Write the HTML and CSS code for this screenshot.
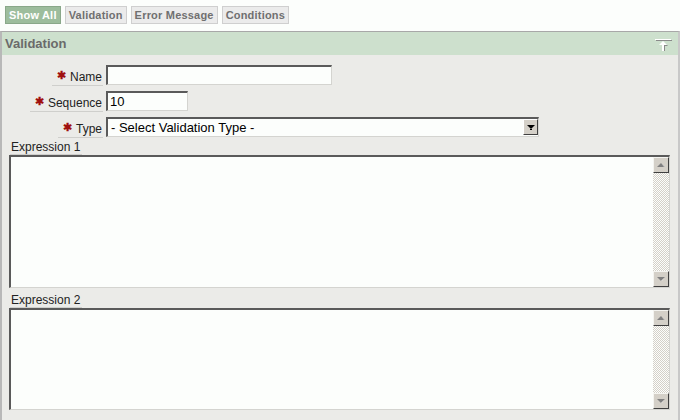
FILE: index.html
```html
<!DOCTYPE html>
<html>
<head>
<meta charset="utf-8">
<link rel="stylesheet" href="styles.css">
</head>
<body>
<div class="tabs">
  <span class="tab tab-active">Show All</span>
  <span class="tab">Validation</span>
  <span class="tab">Error Message</span>
  <span class="tab">Conditions</span>
</div>
<div class="region">
  <div class="region-head">
    <span class="region-title">Validation</span>
    <svg class="collapse" width="18" height="16" viewBox="0 0 18 16">
      <rect x="1" y="2" width="16" height="1" fill="#ffffff"/>
      <rect x="2" y="3" width="16" height="1" fill="#8a8a8a"/>
      <path d="M9 4 L13 8 L10 8 L10 14 L8 14 L8 8 L5 8 Z" fill="#ffffff"/>
      <path d="M10 14 L11 14 L11 9 L14 9 L13 8 L10 8 Z" fill="#8a8a8a"/>
    </svg>
  </div>
  <div class="region-body">
    <div class="form">
      <div class="lbl-cell"><span class="lbl"><span class="req">&#x2731;</span> Name</span></div>
      <div class="field"><div class="input w-name"></div></div>
      <div class="lbl-cell"><span class="lbl"><span class="req">&#x2731;</span> Sequence</span></div>
      <div class="field"><div class="input w-seq">10</div></div>
      <div class="lbl-cell"><span class="lbl"><span class="req">&#x2731;</span> Type</span></div>
      <div class="field">
        <div class="input select">
          <span class="select-text">- Select Validation Type -</span>
          <span class="select-btn"><svg width="8" height="5" viewBox="0 0 8 5"><path d="M0 0 H8 L4 4 Z" fill="#000"/><rect x="3" y="4" width="2" height="1" fill="#000"/></svg></span>
        </div>
      </div>
    </div>
    <div class="expr expr-1">
      <span class="expr-lbl">Expression 1</span>
      <div class="area area-1">
        <div class="area-text"></div>
        <div class="sbar">
          <span class="sbtn"><svg width="10" height="6" viewBox="0 0 10 6"><path d="M1 5 L5 1 L9 5 Z" fill="#808080"/><path d="M5 1 L9 5 L8 5 Z" fill="#ffffff" opacity="0.6"/></svg></span>
          <span class="strack"></span>
          <span class="sbtn"><svg width="10" height="6" viewBox="0 0 10 6"><path d="M1 1 L9 1 L5 5 Z" fill="#808080"/><path d="M9 1 L5 5 L6 5 Z" fill="#ffffff" opacity="0.6"/></svg></span>
        </div>
      </div>
    </div>
    <div class="expr expr-2">
      <span class="expr-lbl">Expression 2</span>
      <div class="area area-2">
        <div class="area-text"></div>
        <div class="sbar">
          <span class="sbtn"><svg width="10" height="6" viewBox="0 0 10 6"><path d="M1 5 L5 1 L9 5 Z" fill="#808080"/><path d="M5 1 L9 5 L8 5 Z" fill="#ffffff" opacity="0.6"/></svg></span>
          <span class="strack"></span>
          <span class="sbtn"><svg width="10" height="6" viewBox="0 0 10 6"><path d="M1 1 L9 1 L5 5 Z" fill="#808080"/><path d="M9 1 L5 5 L6 5 Z" fill="#ffffff" opacity="0.6"/></svg></span>
        </div>
      </div>
    </div>
  </div>
</div>
</body>
</html>
```
FILE: styles.css
```css
html, body {
  margin: 0;
  padding: 0;
  background: #fcfefc;
  font-family: "Liberation Sans", Arial, sans-serif;
  font-size: 12px;
  color: #000;
  overflow: hidden;
}
.tabs {
  display: flex;
  gap: 4px;
  padding: 6px 5px 7px 5px;
}
.tab {
  display: inline-block;
  height: 16px;
  line-height: 16px;
  padding: 0 3px;
  border: 1px solid #cfcfcf;
  background: #ebebeb;
  color: #707070;
  font-weight: bold;
  font-size: 11px;
  letter-spacing: 0.2px;
}
.tab-active {
  background: #9dbd9d;
  border-color: #8aa88a;
  color: #ffffff;
}
.region {
  width: 676px;
  border-top: 1px solid #a8a8a8;
  border-left: 2px solid #b8b8b8;
  border-right: 2px solid #c8c8c8;
}
.region-head {
  display: flex;
  align-items: center;
  justify-content: space-between;
  height: 23px;
  padding: 0 6px 0 3px;
  background: #cde0cd;
}
.region-title {
  font-size: 13px;
  font-weight: bold;
  color: #6a6a6a;
}
.collapse {
  display: block;
  margin-top: 2px;
}
.region-body {
  background: #ebebe8;
  padding: 10px 9px 12px 7px;
}
.form {
  display: grid;
  grid-template-columns: 94px auto;
  column-gap: 3px;
  row-gap: 5px;
  justify-items: start;
}
.lbl-cell {
  justify-self: end;
  display: flex;
  align-items: flex-end;
  height: 21px;
}
.lbl {
  display: inline-block;
  padding: 0 1px 1px 5px;
  border-bottom: 1px solid #cfcfcc;
  color: #222;
  line-height: 14px;
}
.req {
  color: #a01010;
  font-size: 11px;
  font-weight: bold;
  vertical-align: 2px;
  margin-right: 1px;
}
.field {
  display: flex;
}
.input {
  box-sizing: border-box;
  height: 20px;
  background: #fcfefc;
  border-top: 2px solid #5a5a5a;
  border-left: 2px solid #5a5a5a;
  border-right: 1px solid #d4d4d0;
  border-bottom: 1px solid #d4d4d0;
  font-size: 13px;
  line-height: 17px;
  padding-left: 2px;
}
.w-name { width: 226px; }
.w-seq { width: 82px; }
.select {
  width: 433px;
  display: flex;
  justify-content: space-between;
  padding-left: 3px;
}
.select-btn {
  box-sizing: border-box;
  width: 15px;
  height: 16px;
  background: #d4d0c8;
  border-top: 1px solid #ffffff;
  border-left: 1px solid #ffffff;
  border-right: 1px solid #404040;
  border-bottom: 1px solid #404040;
  display: flex;
  align-items: center;
  justify-content: center;
}
.expr {
  display: flex;
  flex-direction: column;
  align-items: flex-start;
}
.expr-1 { margin-top: 3px; }
.expr-2 { margin-top: 6px; }
.expr-lbl {
  display: block;
  padding: 0 2px 0 1px;
  border-bottom: 1px solid #cfcfcc;
  color: #222;
  line-height: 13px;
  margin-left: 1px;
}
.area {
  box-sizing: border-box;
  width: 661px;
  display: flex;
  background: #fcfefc;
  border-top: 2px solid #5a5a5a;
  border-left: 2px solid #5a5a5a;
  border-right: 1px solid #d4d4d0;
  border-bottom: 1px solid #d4d4d0;
}
.area-1 { height: 133px; }
.area-2 { height: 102px; }
.area-text {
  flex: 1;
}
.sbar {
  width: 16px;
  display: flex;
  flex-direction: column;
  background: repeating-conic-gradient(#d4d0c8 0 25%, #fcfefc 0 50%) 0 0 / 2px 2px;
}
.sbtn {
  box-sizing: border-box;
  width: 16px;
  height: 16px;
  background: #d4d0c8;
  border-top: 1px solid #f4f4f0;
  border-left: 1px solid #f4f4f0;
  border-right: 1px solid #404040;
  border-bottom: 1px solid #404040;
  display: flex;
  align-items: center;
  justify-content: center;
}
.strack {
  flex: 1;
}
```
